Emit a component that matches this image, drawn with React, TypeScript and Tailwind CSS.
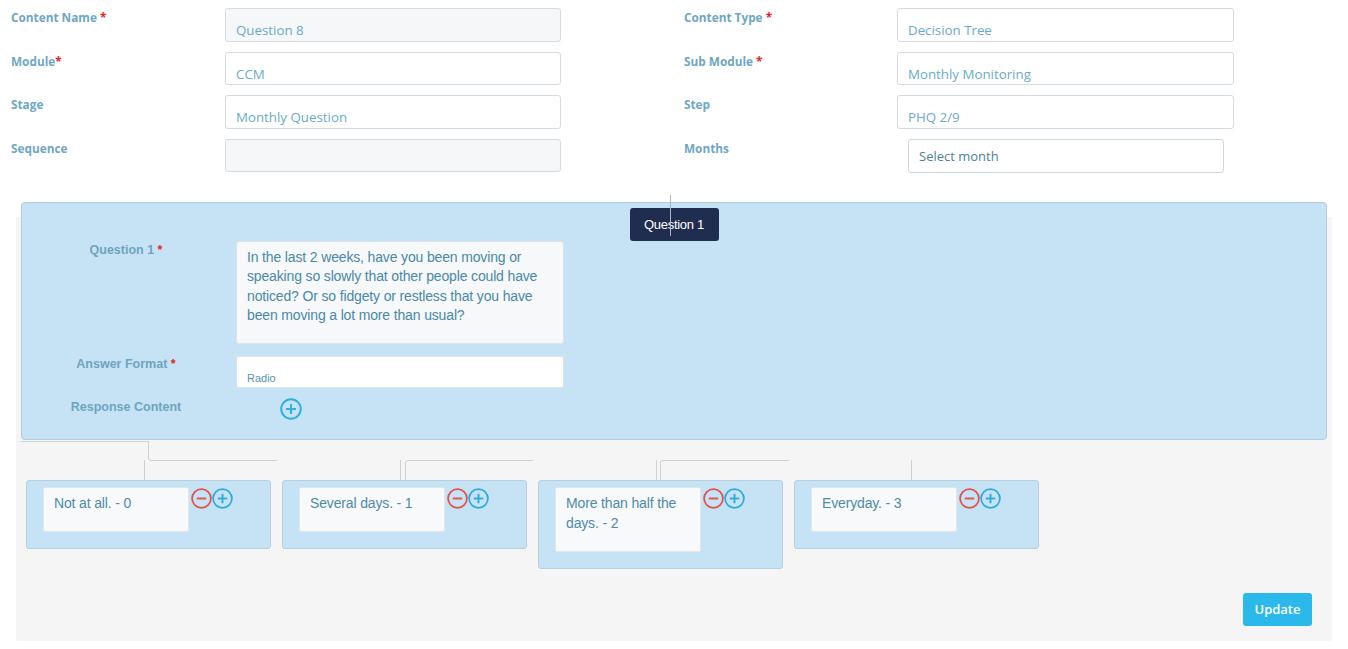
import React from "react";

const Req = () => <span className="text-[#e3231c]"> *</span>;

function TopLabel({ children }: { children: React.ReactNode }) {
  return (
    <div className="pt-[2px] text-[11.8px] leading-[15px] font-bold text-[#6ea7c3]">{children}</div>
  );
}

function TopInput({ value, grey }: { value?: string; grey?: boolean }) {
  return (
    <div
      className={`h-[33.5px] rounded-[3px] border border-[#d4dbe1] pl-[10px] pt-[13px] text-[13.3px] leading-[17px] text-[#6aaac8] ${
        grey ? "bg-[#f5f7f9]" : "bg-white"
      }`}
    >
      {value}
    </div>
  );
}

function Circle({ kind }: { kind: "minus" | "plus" }) {
  const c = kind === "minus" ? "#e5514b" : "#2badE3";
  return (
    <svg width="21" height="21" viewBox="0 0 21 21" className="block">
      <circle cx="10.5" cy="10.5" r="9.4" fill="none" stroke={c} strokeWidth="1.8" />
      <line x1="5.8" y1="10.5" x2="15.2" y2="10.5" stroke={c} strokeWidth="1.9" />
      {kind === "plus" && <line x1="10.5" y1="5.8" x2="10.5" y2="15.2" stroke={c} strokeWidth="1.9" />}
    </svg>
  );
}

function AnswerCard({ text }: { text: string }) {
  return (
    <div className="w-[245px] shrink-0 rounded-[3px] border border-[#b9cfdf] bg-[#c6e3f6] pt-[6px] pl-[16px] pb-[16px] flex items-start">
      <div className="w-[146px] rounded-[2px] border border-[#dfe6ec] bg-[#f7f9fb] pt-[5px] pl-[10px] pr-[8px] pb-[18px] text-[14px] leading-[20px] tracking-[-0.15px] text-[#4f8aa8]">
        {text}
      </div>
      <div className="ml-[2px] mt-[1px] flex">
        <Circle kind="minus" />
        <Circle kind="plus" />
      </div>
    </div>
  );
}

export default function App() {
  const sans = { fontFamily: '"Open Sans", "Noto Sans", sans-serif' };
  const arial = { fontFamily: '"Liberation Sans", Arial, sans-serif' };
  return (
    <div className="w-[1348px] h-[649px] bg-white overflow-hidden" style={sans}>
      {/* Top form */}
      <div className="pt-[8px] pl-[11px] flex flex-col gap-[10px]">
        <div className="flex">
          <div className="w-[214px]"><TopLabel>Content Name<Req /></TopLabel></div>
          <div className="w-[336px]"><TopInput value="Question 8" grey /></div>
          <div className="w-[123px]" />
          <div className="w-[213px]"><TopLabel>Content Type<Req /></TopLabel></div>
          <div className="w-[337px]"><TopInput value="Decision Tree" /></div>
        </div>
        <div className="flex">
          <div className="w-[214px]"><TopLabel>Module<span className="text-[#e3231c]">*</span></TopLabel></div>
          <div className="w-[336px]"><TopInput value="CCM" /></div>
          <div className="w-[123px]" />
          <div className="w-[213px]"><TopLabel>Sub Module<Req /></TopLabel></div>
          <div className="w-[337px]"><TopInput value="Monthly Monitoring" /></div>
        </div>
        <div className="flex">
          <div className="w-[214px]"><TopLabel>Stage</TopLabel></div>
          <div className="w-[336px]"><TopInput value="Monthly Question" /></div>
          <div className="w-[123px]" />
          <div className="w-[213px]"><TopLabel>Step</TopLabel></div>
          <div className="w-[337px]"><TopInput value="PHQ 2/9" /></div>
        </div>
        <div className="flex">
          <div className="w-[214px]"><TopLabel>Sequence</TopLabel></div>
          <div className="w-[336px]"><TopInput grey /></div>
          <div className="w-[123px]" />
          <div className="w-[213px]"><TopLabel>Months</TopLabel></div>
          <div className="w-[337px] pl-[11px]">
            <div className="w-[316px] h-[34px] rounded-[3px] border border-[#cfd6dc] bg-white pl-[10px] pt-[7px] text-[13px] leading-[18px] text-[#4e7f98]">
              Select month
            </div>
          </div>
        </div>
      </div>

      {/* Grey tree panel */}
      <div className="mx-[16px] mt-[44px] flex flex-col bg-[#f5f5f5] rounded-b-[3px] pb-[15px]" style={arial}>
        <div className="relative -mt-[15px] mx-[5px] h-[238px] rounded-[4px] border border-[#b5cbdc] bg-[#c6e3f6]">
          <div className="absolute left-[648px] -top-[8px] h-[41px] w-px bg-[#aab8c4] z-10" />
          <div className="flex justify-center pt-[5px]">
            <div className="h-[33px] w-[89px] rounded-[3px] bg-[#1f2e4e] text-white text-[13px] leading-[33px] text-center tracking-[-0.3px]">
              Question 1
            </div>
          </div>
          <div className="flex">
            <div className="w-[208px] text-center pt-[1px] text-[12.5px] leading-[16px] font-bold text-[#6ea4be]">
              Question 1<Req />
            </div>
            <div className="ml-[6px] w-[328px] h-[103px] rounded-[3px] border border-[#dde3e8] bg-[#f6f8fa] pt-[6px] pl-[10px] pr-[8px] text-[14px] leading-[19.5px] tracking-[-0.15px] text-[#4a88a7]">
              In the last 2 weeks, have you been moving or speaking so slowly that other people could have noticed? Or so fidgety or restless that you have been moving a lot more than usual?
            </div>
          </div>
          <div className="flex mt-[12px]">
            <div className="w-[208px] text-center pt-0 text-[12.5px] leading-[16px] font-bold text-[#6ea4be]">
              Answer Format<Req />
            </div>
            <div className="ml-[6px] w-[328px] h-[32px] rounded-[3px] border border-[#dde3e8] bg-white pt-[14px] pl-[10px] text-[11px] leading-[14px] text-[#5495b3]">
              Radio
            </div>
          </div>
          <div className="flex mt-[10px] items-center">
            <div className="w-[208px] text-center text-[12.5px] leading-[16px] font-bold text-[#6ea4be] -mt-[4px]">
              Response Content
            </div>
            <div className="ml-[50px]">
              <svg width="22" height="22" viewBox="0 0 22 22" className="block">
                <circle cx="11" cy="11" r="9.8" fill="none" stroke="#2badE3" strokeWidth="1.9" />
                <line x1="6" y1="11" x2="16" y2="11" stroke="#2badE3" strokeWidth="1.9" />
                <line x1="11" y1="6" x2="11" y2="16" stroke="#2badE3" strokeWidth="1.9" />
              </svg>
            </div>
          </div>
        </div>

        {/* connectors */}
        <svg width="1316" height="40" className="block">
          <g fill="none" stroke="#cfcfcf" strokeWidth="1">
            <path d="M5,1.5 H132.5 V18 Q132.5,20.5 135,20.5 H261" />
            <path d="M128.5,20 V40" />
            <path d="M384.5,20 V40" />
            <path d="M389.5,40 V23 Q389.5,20.5 392,20.5 H517" />
            <path d="M640.5,20 V40" />
            <path d="M644.5,40 V23 Q644.5,20.5 647,20.5 H773" />
            <path d="M895.5,20 V40" />
          </g>
        </svg>

        <div className="flex items-start gap-[11px] px-[10px]">
          <AnswerCard text="Not at all. - 0" />
          <AnswerCard text="Several days. - 1" />
          <AnswerCard text="More than half the days. - 2" />
          <AnswerCard text="Everyday. - 3" />
        </div>

        <div className="flex justify-end pr-[20px] mt-[24px]">
          <div
            className="h-[33px] w-[69px] rounded-[3px] bg-[#2bb9ec] text-white text-[13px] leading-[33px] text-center font-semibold"
            style={sans}
          >
            Update
          </div>
        </div>
      </div>
    </div>
  );
}
